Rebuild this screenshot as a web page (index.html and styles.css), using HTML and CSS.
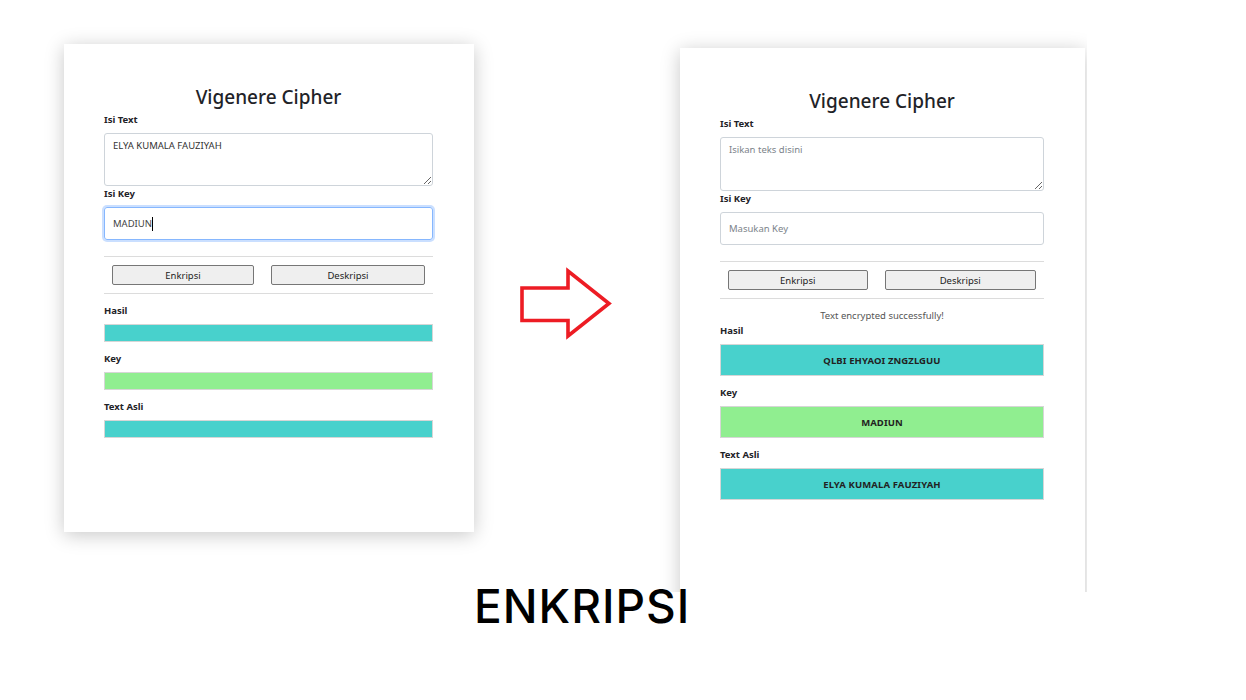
FILE: index.html
```html
<!DOCTYPE html>
<html lang="id">
<head>
<meta charset="utf-8">
<title>Vigenere Cipher - Enkripsi</title>
<link rel="stylesheet" href="styles.css">
</head>
<body>
<div class="canvas">
  <section class="shot shot-left">
    <div class="card card-left">
      <h1 class="title">Vigenere Cipher</h1>
      <div class="label">Isi Text</div>
      <textarea class="area">ELYA KUMALA FAUZIYAH</textarea>
      <div class="label">Isi Key</div>
      <div class="field field-focus">MADIUN<span class="caret"></span></div>
      <hr class="rule rule-top">
      <div class="btn-row">
        <button class="btn btn-enk">Enkripsi</button>
        <button class="btn btn-desk">Deskripsi</button>
      </div>
      <hr class="rule">
      <div class="label label-first">Hasil</div>
      <div class="bar bar-teal"></div>
      <div class="label label-res">Key</div>
      <div class="bar bar-green"></div>
      <div class="label label-res">Text Asli</div>
      <div class="bar bar-teal"></div>
    </div>
  </section>

  <svg class="arrow" width="100" height="80" viewBox="0 0 100 80">
    <polygon points="4,22 50,22 50,5 91,37.5 50,70 50,54.5 4,54.5" fill="none" stroke="#ed1c24" stroke-width="3.6" stroke-linejoin="miter"/>
  </svg>

  <section class="shot shot-right">
    <div class="card card-right">
      <h1 class="title">Vigenere Cipher</h1>
      <div class="label">Isi Text</div>
      <textarea class="area area-tall" placeholder="Isikan teks disini"></textarea>
      <div class="label">Isi Key</div>
      <div class="field"><span class="ph">Masukan Key</span></div>
      <hr class="rule rule-top">
      <div class="btn-row">
        <button class="btn btn-enk">Enkripsi</button>
        <button class="btn btn-desk">Deskripsi</button>
      </div>
      <hr class="rule">
      <p class="msg">Text encrypted successfully!</p>
      <div class="label label-first">Hasil</div>
      <div class="bar bar-tall bar-teal">QLBI EHYAOI ZNGZLGUU</div>
      <div class="label label-res">Key</div>
      <div class="bar bar-tall bar-green">MADIUN</div>
      <div class="label label-res">Text Asli</div>
      <div class="bar bar-tall bar-teal">ELYA KUMALA FAUZIYAH</div>
    </div>
  </section>

  <div class="caption">ENKRIPSI</div>
</div>
</body>
</html>
```

FILE: styles.css
```css
* { box-sizing: border-box; }

html, body {
  margin: 0;
  padding: 0;
  background: #ffffff;
}

.canvas {
  position: relative;
  width: 1246px;
  height: 700px;
  overflow: hidden;
  font-family: "Noto Sans", "Open Sans", sans-serif;
  color: #212529;
}

.shot {
  position: absolute;
}

.shot-left {
  left: 64px;
  top: 44px;
}

.shot-right {
  left: 650px;
  top: 18px;
  width: 437px;
  height: 574px;
  overflow: hidden;
  padding: 30px 0 0 30px;
}

.card {
  background: #ffffff;
  padding: 41px 41px 0 40px;
  display: flex;
  flex-direction: column;
  box-shadow: 0 3px 18px rgba(0, 0, 0, 0.22);
}

.card-left {
  width: 410px;
  height: 488px;
}

.card-right {
  width: 405px;
  height: 600px;
}

.title {
  margin: 0;
  font-size: 19px;
  line-height: 24px;
  font-weight: 500;
  text-align: center;
  color: #1f2328;
}

.label {
  font-size: 9.5px;
  line-height: 12px;
  font-weight: 700;
  margin: 5px 0 7px;
  color: #1f2328;
}

.area {
  display: block;
  width: 100%;
  height: 53px;
  margin: 0 0 -3px;
  padding: 6px 8px;
  border: 1px solid #ced4da;
  border-radius: 3px;
  font-family: "Noto Sans", "Open Sans", sans-serif;
  font-size: 9.5px;
  line-height: 12px;
  color: #333;
  resize: vertical;
  background: #fff;
}

.area-tall {
  height: 54px;
}

.area::placeholder {
  color: #7c838a;
}

.field {
  height: 33px;
  width: 100%;
  border: 1px solid #ced4da;
  border-radius: 3px;
  padding: 0 8px;
  display: flex;
  align-items: center;
  font-size: 9.5px;
  color: #444;
}

.field-focus {
  border-color: #86b7fe;
  box-shadow: 0 0 0 2px rgba(13, 110, 253, 0.22);
}

.caret {
  display: inline-block;
  width: 1px;
  height: 14px;
  background: #000;
}

.ph {
  color: #7c838a;
}

.rule {
  border: 0;
  border-top: 1px solid #dcdcdc;
  margin: 8px 0;
  height: 0;
}

.rule-top {
  margin-top: 16px;
}

.btn-row {
  display: flex;
  gap: 17px;
  padding: 0 8px;
}

.btn {
  height: 20px;
  padding: 0;
  border: 1px solid #767676;
  border-radius: 2px;
  background: #efefef;
  font-family: "Noto Sans", "Open Sans", sans-serif;
  font-size: 9.5px;
  color: #222;
}

.btn-enk { flex: 1 1 0; }
.btn-desk { flex: 1 1 14px; }

.label-first {
  margin: 3px 0 7px;
}

.label-res {
  margin: 11px 0 7px;
}

.bar {
  height: 18px;
  border: 1px solid #d6d6d6;
  display: flex;
  align-items: center;
  justify-content: center;
  font-size: 9.5px;
  font-weight: 700;
  color: #222;
  letter-spacing: 0.1px;
}

.bar-tall {
  height: 32px;
}

.bar-teal { background: #48d1cc; }
.bar-green { background: #90ee90; }

.msg {
  margin: 3px 0 0;
  font-size: 9.5px;
  line-height: 12px;
  text-align: center;
  color: #555;
}

.arrow {
  position: absolute;
  left: 518px;
  top: 266px;
}

.caption {
  position: absolute;
  left: 474px;
  top: 578px;
  font-family: Inter, "Noto Sans", sans-serif;
  font-size: 46px;
  line-height: 56px;
  font-weight: 500;
  letter-spacing: 1px;
  color: #000;
}
```
